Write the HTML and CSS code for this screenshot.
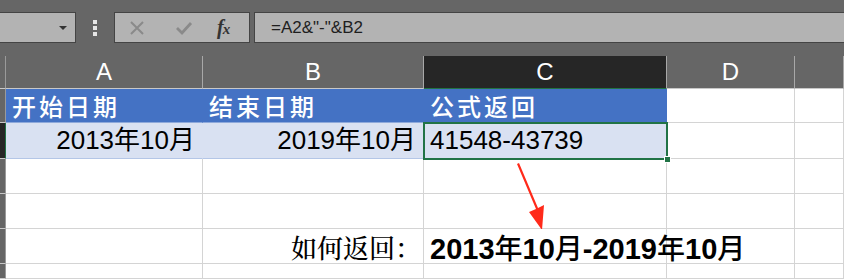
FILE: index.html
```html
<!DOCTYPE html>
<html lang="zh-CN">
<head>
<meta charset="utf-8">
<title>Excel</title>
<link rel="stylesheet" href="styles.css">
</head>
<body>
<div class="toolbar">
  <div class="namebox"><span class="caret"></span></div>
  <div class="dots"><span></span><span></span><span></span></div>
  <div class="fbtns">
    <svg class="ico" width="16" height="16" viewBox="0 0 16 16"><path d="M2 2 L14 14 M14 2 L2 14" stroke="#8a8a8a" stroke-width="2" fill="none"/></svg>
    <svg class="ico" width="18" height="16" viewBox="0 0 18 16"><path d="M2 8 L7 13 L16 3" stroke="#8a8a8a" stroke-width="2.8" fill="none"/></svg>
    <span class="fx">f<i>x</i></span>
  </div>
  <div class="fbar">=A2&amp;"-"&amp;B2</div>
</div>
<div class="sheet">
  <div class="c rh"></div>
  <div class="c ch">A</div>
  <div class="c ch">B</div>
  <div class="c ch sel-col">C</div>
  <div class="c ch">D</div>
  <div class="c ch"></div>

  <div class="c rh"></div>
  <div class="c blue">开始日期</div>
  <div class="c blue">结束日期</div>
  <div class="c blue">公式返回</div>
  <div class="c"></div>
  <div class="c"></div>

  <div class="c rh rh-sel"></div>
  <div class="c lb num">2013年10月</div>
  <div class="c lb num">2019年10月</div>
  <div class="c lb txt">41548-43739<div class="sel"><span class="handle"></span></div></div>
  <div class="c"></div>
  <div class="c"></div>

  <div class="c rh"></div>
  <div class="c"></div>
  <div class="c"></div>
  <div class="c"></div>
  <div class="c"></div>
  <div class="c"></div>

  <div class="c rh"></div>
  <div class="c"></div>
  <div class="c"></div>
  <div class="c"></div>
  <div class="c"></div>
  <div class="c"></div>

  <div class="c rh"></div>
  <div class="c"></div>
  <div class="c ask">如何返回：</div>
  <div class="c answer">2013<span class="cj">年</span>10<span class="cj">月</span>-2019<span class="cj">年</span>10<span class="cj">月</span></div>
  <div class="c"></div>
  <div class="c"></div>

  <div class="c rh"></div>
  <div class="c"></div>
  <div class="c"></div>
  <div class="c"></div>
  <div class="c"></div>
  <div class="c"></div>

  <svg class="arrow" width="60" height="70" viewBox="0 0 60 70">
    <path d="M10 0 L29 45 L22 48 L35 66 L37 41 L31 44 L12 -1 Z" fill="#ff2a1a"/>
  </svg>
</div>
</body>
</html>
```

FILE: styles.css
```css
html, body {
  margin: 0;
  padding: 0;
  background: #ffffff;
  overflow: hidden;
}
body {
  width: 844px;
  height: 279px;
  font-family: "Liberation Sans", "Noto Sans CJK SC", sans-serif;
}
.toolbar {
  height: 56px;
  background: #666666;
  display: flex;
  align-items: flex-start;
  padding-top: 12px;
  box-sizing: border-box;
}
.namebox {
  width: 76px;
  height: 31px;
  box-sizing: border-box;
  background: #b3b3b3;
  border: 1px solid #444;
  border-left: none;
  display: flex;
  align-items: center;
  justify-content: flex-end;
  padding-right: 8px;
}
.caret {
  width: 0;
  height: 0;
  border-left: 4px solid transparent;
  border-right: 4px solid transparent;
  border-top: 4px solid #333;
}
.dots {
  width: 38px;
  height: 31px;
  display: flex;
  flex-direction: column;
  align-items: center;
  justify-content: center;
  gap: 2px;
}
.dots span {
  width: 4px;
  height: 4px;
  background: #e6e6e6;
}
.fbtns {
  width: 136px;
  height: 31px;
  box-sizing: border-box;
  background: #b3b3b3;
  border: 1px solid #444;
  display: flex;
  align-items: center;
  padding-left: 14px;
}
.fbtns .ico:first-child { margin-right: 30px; }
.fbtns .ico:nth-child(2) { margin-right: 24px; }
.fx {
  font-family: "Liberation Serif", serif;
  font-style: italic;
  font-weight: bold;
  font-size: 20px;
  color: #333;
  letter-spacing: -1px;
  line-height: 20px;
}
.fx i { font-size: 15px; }
.fbar {
  margin-left: 4px;
  flex: 1;
  height: 31px;
  box-sizing: border-box;
  background: #b3b3b3;
  border: 1px solid #444;
  border-right: none;
  font-size: 17px;
  color: #1e1e1e;
  line-height: 29px;
  padding-left: 16px;
}
.sheet {
  position: relative;
  display: grid;
  grid-template-columns: 6px 197px 221px 243px 128px 49px;
  grid-template-rows: 33px 34px 36px 35px 35px 35px 15px;
}
.c {
  box-sizing: border-box;
  border-right: 1px solid #d4d4d4;
  border-bottom: 1px solid #d4d4d4;
  background: #fff;
  white-space: nowrap;
  overflow: visible;
  min-width: 0;
}
.rh {
  background: #666;
  border-right: 1px solid #9a9a9a;
  border-bottom: 1px solid #c8c8c8;
}
.rh-sel {
  background: #262626;
  border-right: 1px solid #217346;
}
.ch {
  background: #666;
  color: #fff;
  font-size: 24px;
  text-align: center;
  line-height: 32px;
  border-right: 1px solid #a8a8a8;
  border-bottom: 1px solid #c8c8c8;
}
.sel-col {
  background: #262626;
  border-bottom: 1px solid #217346;
}
.blue {
  background: #4472c4;
  border-right-color: #4472c4;
  border-bottom: 1px solid #8ea9db;
  color: #fff;
  font-family: "Noto Sans CJK SC", sans-serif;
  font-size: 24px;
  font-weight: 500;
  letter-spacing: 3px;
  line-height: 33px;
  padding-left: 6px;
}
.lb {
  background: #d9e1f2;
  border-right-color: #d9e1f2;
  border-bottom: 1px solid #b4c6e7;
  font-size: 26px;
  line-height: 35px;
  color: #000;
}
.num {
  text-align: right;
  padding-right: 7px;
}
.txt {
  position: relative;
  padding-left: 6px;
}
.sel {
  position: absolute;
  left: -1px;
  top: -1px;
  right: -2px;
  bottom: -2px;
  border: 2px solid #217346;
}
.handle {
  position: absolute;
  right: -5px;
  bottom: -5px;
  width: 7px;
  height: 7px;
  background: #217346;
  border: 1px solid #fff;
  box-sizing: border-box;
}
.ask {
  text-align: right;
  padding-right: 2px;
  font-family: "Noto Serif CJK SC", "Noto Sans CJK SC", serif;
  font-size: 26px;
  font-weight: 500;
  line-height: 36px;
  color: #000;
}
.answer {
  padding-left: 6px;
  font-family: "Liberation Sans", "Noto Sans CJK SC", sans-serif;
  font-weight: bold;
  font-size: 29px;
  line-height: 36px;
  color: #000;
  position: relative;
  z-index: 1;
}
.answer .cj {
  font-family: "Noto Sans CJK SC", sans-serif;
  font-weight: 500;
  font-size: 28px;
}
.arrow {
  position: absolute;
  left: 507px;
  top: 108px;
  overflow: visible;
}
```
